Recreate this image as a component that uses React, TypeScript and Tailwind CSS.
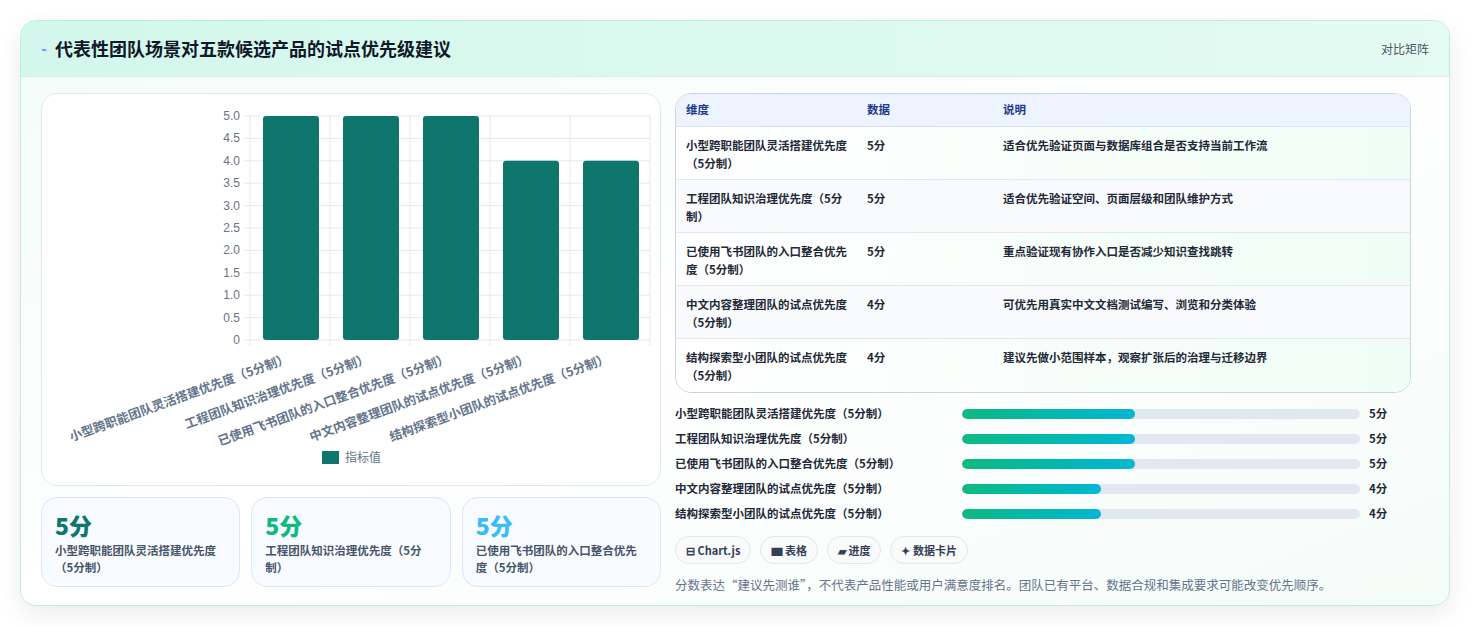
const font = { fontFamily: '"Noto Sans CJK SC", "Noto Sans", sans-serif' };

const rows = [
  { name: "小型跨职能团队灵活搭建优先度（5分制）", v: 5, note: "适合优先验证页面与数据库组合是否支持当前工作流" },
  { name: "工程团队知识治理优先度（5分制）", v: 5, note: "适合优先验证空间、页面层级和团队维护方式" },
  { name: "已使用飞书团队的入口整合优先度（5分制）", v: 5, note: "重点验证现有协作入口是否减少知识查找跳转" },
  { name: "中文内容整理团队的试点优先度（5分制）", v: 4, note: "可优先用真实中文文档测试编写、浏览和分类体验" },
  { name: "结构探索型小团队的试点优先度（5分制）", v: 4, note: "建议先做小范围样本，观察扩张后的治理与迁移边界" },
];

function Chart() {
  const x0 = 208, x1 = 608, yTop = 22, yBot = 246;
  const ticks = [5, 4.5, 4, 3.5, 3, 2.5, 2, 1.5, 1, 0.5, 0];
  const y = (v: number) => yBot - (v / 5) * (yBot - yTop);
  return (
    <svg width="620" height="392" className="block">
      {ticks.map((t) => (
        <g key={t}>
          <line x1={x0 - 6} x2={x1} y1={y(t)} y2={y(t)} stroke="#e5e7eb" />
          <text x={x0 - 10} y={y(t) + 4} textAnchor="end" fontSize="12" fill="#6b7280" fontFamily="Liberation Sans, sans-serif">
            {t === 0 ? "0" : t.toFixed(1)}
          </text>
        </g>
      ))}
      {[0, 1, 2, 3, 4, 5].map((i) => (
        <line key={i} x1={x0 + i * 80} x2={x0 + i * 80} y1={yTop} y2={yBot + 6} stroke="#e5e7eb" />
      ))}
      {rows.map((r, i) => (
        <g key={i}>
          <rect x={x0 + i * 80 + 13} y={y(r.v)} width={56} height={yBot - y(r.v)} rx={3} fill="#0f766e" />
          <text
            x={x0 + i * 80 + 40}
            y={yBot + 22}
            textAnchor="end"
            fontSize="12.5"
            fontWeight="600"
            fill="#64748b"
            transform={`rotate(-20 ${x0 + i * 80 + 40} ${yBot + 22})`}
            style={font}
          >
            {r.name}
          </text>
        </g>
      ))}
      <rect x={280} y={357} width={17} height={13} fill="#0f766e" />
      <text x={303} y={368} fontSize="12" fill="#64748b" style={font}>指标值</text>
    </svg>
  );
}

export default function App() {
  const stats = [
    { c: "text-[#0f766e]", r: rows[0] },
    { c: "text-[#10b981]", r: rows[1] },
    { c: "text-[#38bdf8]", r: rows[2] },
  ];
  return (
    <div className="w-[1471px] h-[626px] bg-white p-5" style={font}>
      <div className="w-[1430px] h-[586px] rounded-2xl border border-[#bfeee0] bg-gradient-to-br from-[#f3fcf9] via-white to-[#f4fcf8] shadow-[0_8px_24px_rgba(0,0,0,0.08)] overflow-hidden">
        <div className="h-[56px] flex items-center justify-between px-5 bg-gradient-to-r from-[#d3f7ec] to-[#e3fbf3] border-b border-[#d7efe7]">
          <div className="flex items-center gap-2">
            <span className="text-[10px] text-[#3b82f6]">⌁</span>
            <h1 className="text-[18px] font-bold text-[#111827]">代表性团队场景对五款候选产品的试点优先级建议</h1>
          </div>
          <span className="text-[12px] text-[#4b5563]">对比矩阵</span>
        </div>
        <div className="flex gap-[14px] px-5 pt-4">
          <div className="w-[620px] flex flex-col gap-[11px]">
            <div className="h-[393px] rounded-2xl border border-[#e2e8f0] bg-white overflow-hidden">
              <Chart />
            </div>
            <div className="grid grid-cols-3 gap-[11px]">
              {stats.map((s, i) => (
                <div key={i} className="h-[90px] rounded-2xl border border-[#dbe7f3] bg-[#f8fbff] px-[13px] pt-[12px]">
                  <div className={`text-[23px] font-extrabold leading-[30px] ${s.c}`}>{s.r.v}分</div>
                  <div className="text-[11.5px] font-semibold text-[#475569] leading-[17px] mt-[2px]">{s.r.name}</div>
                </div>
              ))}
            </div>
          </div>
          <div className="flex-1 pr-[18px]">
            <div className="rounded-2xl border border-[#cbd5e1] overflow-hidden bg-white">
              <div className="h-[33px] flex items-center bg-[#eef4ff] text-[11.5px] font-semibold text-[#1e3a8a] border-b border-[#dbe3ef]">
                <span className="w-[191px] pl-[10px]">维度</span>
                <span className="w-[136px]">数据</span>
                <span>说明</span>
              </div>
              {rows.map((r, i) => (
                <div key={i} className={`h-[53px] flex items-start pt-[9px] text-[11.5px] font-semibold text-[#1f2937] leading-[18px] ${i < 4 ? "border-b border-[#e2e8f0]" : ""} ${i % 2 ? "bg-[#f8fafc]" : "bg-gradient-to-r from-white to-[#f0fdf6]"}`}>
                  <span className="w-[191px] pl-[10px] pr-3">{r.name}</span>
                  <span className="w-[136px]">{r.v}分</span>
                  <span>{r.note}</span>
                </div>
              ))}
            </div>
            <div className="mt-[12px] flex flex-col gap-[7px]">
              {rows.map((r, i) => (
                <div key={i} className="h-[18px] flex items-center text-[11.5px] font-semibold text-[#1f2937]">
                  <span className="w-[287px]">{r.name}</span>
                  <div className="w-[398px] h-[10px] rounded-full bg-[#e2e8f0] overflow-hidden">
                    <div className={`h-full rounded-full bg-gradient-to-r from-[#10b981] to-[#06b6d4] ${r.v === 5 ? "w-[173px]" : "w-[139px]"}`} />
                  </div>
                  <span className="ml-[9px]">{r.v}分</span>
                </div>
              ))}
            </div>
            <div className="flex gap-[9px] mt-[13px]">
              {["⊟ Chart.js", "▆ 表格", "▰ 进度", "✦ 数据卡片"].map((c) => (
                <span key={c} className="h-[28px] px-[10px] flex items-center rounded-full border border-[#e2e8f0] bg-[#f8fafc] text-[11px] font-semibold text-[#334155]">{c}</span>
              ))}
            </div>
            <p className="mt-[12px] text-[12.5px] text-[#64748b]">分数表达“建议先测谁”，不代表产品性能或用户满意度排名。团队已有平台、数据合规和集成要求可能改变优先顺序。</p>
          </div>
        </div>
      </div>
    </div>
  );
}
